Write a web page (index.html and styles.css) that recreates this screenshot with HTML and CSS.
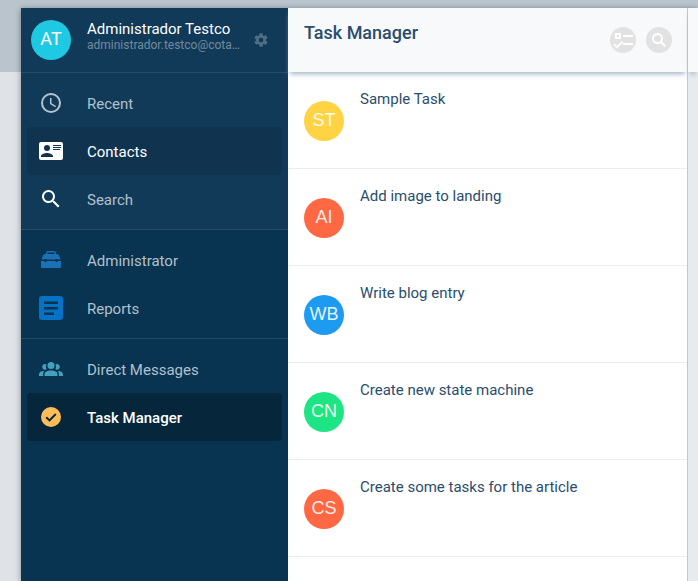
FILE: index.html
```html
<!DOCTYPE html>
<html lang="en">
<head>
<meta charset="utf-8">
<title>Task Manager</title>
<link rel="stylesheet" href="styles.css">
</head>
<body>
<div class="app">
  <aside class="sidebar">
    <div class="sidebar-top">
      <div class="profile">
        <span class="avatar cyan">AT</span>
        <div class="profile-text">
          <div class="profile-name">Administrador Testco</div>
          <div class="profile-mail">administrador.testco@cota…</div>
        </div>
        <button class="gear" aria-label="Settings"><svg viewBox="0 0 24 24" width="16" height="16"><path fill="currentColor" d="M19.43 12.98c.04-.32.07-.64.07-.98s-.03-.66-.07-.98l2.11-1.65c.19-.15.24-.42.12-.64l-2-3.46c-.12-.22-.39-.3-.61-.22l-2.49 1c-.52-.4-1.08-.73-1.69-.98l-.38-2.65A.49.49 0 0 0 14 2h-4c-.25 0-.46.18-.49.42l-.38 2.65c-.61.25-1.17.59-1.69.98l-2.49-1c-.23-.09-.49 0-.61.22l-2 3.46c-.13.22-.07.49.12.64l2.11 1.65c-.04.32-.07.65-.07.98s.03.66.07.98l-2.11 1.65c-.19.15-.24.42-.12.64l2 3.46c.12.22.39.3.61.22l2.49-1c.52.4 1.08.73 1.69.98l.38 2.65c.03.24.24.42.49.42h4c.25 0 .46-.18.49-.42l.38-2.65c.61-.25 1.17-.59 1.69-.98l2.49 1c.23.09.49 0 .61-.22l2-3.46c.12-.22.07-.49-.12-.64zM12 15.5a3.5 3.5 0 1 1 0-7 3.5 3.5 0 0 1 0 7z"/></svg></button>
      </div>
      <nav class="group" aria-label="Shortcuts">
        <a class="item" href="#recent"><svg class="icon muted" viewBox="0 0 24 24"><path fill="currentColor" d="M12 2a10 10 0 1 0 0 20 10 10 0 0 0 0-20zm0 18a8 8 0 1 1 0-16 8 8 0 0 1 0 16zm.5-13H11v6l5.25 3.15.75-1.23-4.5-2.67z"/></svg><span class="label">Recent</span></a>
        <a class="item hover" href="#contacts"><svg class="icon" viewBox="0 0 24 24"><path fill="currentColor" fill-rule="evenodd" d="M2 3h20a2 2 0 0 1 2 2v14a2 2 0 0 1-2 2H2a2 2 0 0 1-2-2V5a2 2 0 0 1 2-2zM8 6a3 3 0 1 0 0 6 3 3 0 0 0 0-6zM2 18h12v-1c0-2-4-3.1-6-3.1S2 15 2 17zM14 6v1h8V6zM14 8v1h8V8zM14 10v1h7v-1z"/></svg><span class="label">Contacts</span></a>
        <a class="item" href="#search"><svg class="icon" viewBox="0 0 24 24"><path fill="currentColor" d="M15.5 14h-.79l-.28-.27a6.5 6.5 0 1 0-.7.7l.27.28v.79l5 4.99L20.49 19zm-6 0a4.5 4.5 0 1 1 0-9 4.5 4.5 0 0 1 0 9z"/></svg><span class="label">Search</span></a>
      </nav>
    </div>
    <nav class="group" aria-label="Administration">
      <a class="item" href="#administrator"><svg class="icon blue" viewBox="0 0 24 24"><path fill="currentColor" fill-rule="evenodd" d="M7 6V5q0-2 2-2h6q2 0 2 2v1h1q1.500 0 2 1.500l1.500 4H18.500V11h-2v.5h-9V11h-2v.5h-3l1.500-4Q4.500 6 6 6zM8.500 4.500V6h7V4.500zM2 13h3.500v1h2v-1h9v1h2v-1H22v6q0 1-1 1H3q-1 0-1-1z"/></svg><span class="label">Administrator</span></a>
      <a class="item" href="#reports"><svg class="icon bright" viewBox="0 0 24 24"><path fill="currentColor" fill-rule="evenodd" d="M3 0h18a3 3 0 0 1 3 3v18a3 3 0 0 1-3 3H3a3 3 0 0 1-3-3V3a3 3 0 0 1 3-3zM5 5.500V8h14V5.500zM5 11v2.500h14V11zM5 16.500V19h10v-2.500z"/></svg><span class="label">Reports</span></a>
    </nav>
    <nav class="group" aria-label="Channels">
      <a class="item" href="#messages"><svg class="icon teal" viewBox="0 0 24 24"><g fill="currentColor"><circle cx="12" cy="8.500" r="3.500"/><path d="M5.500 19v-1.500c0-3 3-4 6.500-4s6.500 1 6.500 4V19z"/><path d="M7.500 7.500A2.800 2.800 0 1 0 7.500 12.200 5 5 0 0 1 7.500 7.500zM16.500 7.500a2.800 2.800 0 1 1 0 4.700 5 5 0 0 0 0-4.700z"/><path d="M0 19v-1.500C0 15 2 14 5.500 14 4.300 15 4 16.500 4 19zM24 19v-1.500c0-2.500-2-3.500-5.500-3.500 1.200 1 1.500 2.500 1.500 5z"/></g></svg><span class="label">Direct Messages</span></a>
      <a class="item active" href="#tasks" aria-current="page"><svg class="icon amber" viewBox="0 0 24 24"><circle cx="12" cy="12" r="10" fill="currentColor"/><path d="M7.200 12.200l3.300 3.200L16.800 9" fill="none" stroke="#06263c" stroke-width="2"/></svg><span class="label">Task Manager</span></a>
    </nav>
  </aside>
  <main class="tasks">
    <header class="bar">
      <h1>Task Manager</h1>
      <button class="round" aria-label="Select tasks"><svg viewBox="0 0 26 26" width="26" height="26"><g fill="none" stroke="#fff" stroke-width="2"><path d="M6 7h4v4H6zM13 9h10M13 17h10M4 17.200l3 3 5.500-5.500"/></g></svg></button>
      <button class="round" aria-label="Search"><svg viewBox="0 0 26 26" width="26" height="26"><g fill="none" stroke="#fff" stroke-width="2"><circle cx="11.500" cy="11.500" r="4.500"/><path d="M14.700 14.700l4.500 4.500"/></g></svg></button>
    </header>
    <ul class="list">
      <li class="task"><span class="avatar yellow">ST</span><span class="task-title">Sample Task</span></li>
      <li class="task"><span class="avatar coral">AI</span><span class="task-title">Add image to landing</span></li>
      <li class="task"><span class="avatar azure">WB</span><span class="task-title">Write blog entry</span></li>
      <li class="task"><span class="avatar green">CN</span><span class="task-title">Create new state machine</span></li>
      <li class="task"><span class="avatar coral">CS</span><span class="task-title">Create some tasks for the article</span></li>
    </ul>
  </main>
  <section class="detail" aria-label="Detail"><div class="bar"></div></section>
</div>
</body>
</html>
```
FILE: styles.css
```css
* { box-sizing: border-box; }

body {
  margin: 0;
  min-height: 100vh;
  padding: 8px 0 0 21px;
  background: linear-gradient(#b9c4cc 72px, #dfe3e8 72px);
  font-family: Roboto, "Liberation Sans", sans-serif;
  font-size: 15px;
  line-height: 18px;
  color: #2a4d6c;
}

button {
  padding: 0;
  border: 0;
  background: none;
}

svg { display: block; }

.app {
  display: grid;
  grid-template-columns: 267px 1fr 10px;
  min-height: calc(100vh - 8px);
  background: #fff;
  box-shadow: 0 1px 6px rgba(0, 0, 0, 0.4);
}

.sidebar {
  background: #083351;
  color: #b3c1cb;
}

.sidebar-top { background: #113a59; }

.profile {
  display: flex;
  align-items: center;
  height: 64px;
  padding: 0 19px 0 10px;
}

.profile-text {
  flex: 1;
  min-width: 0;
  margin: 0 12px 8px 16px;
}

.profile-name {
  color: #fff;
  white-space: nowrap;
}

.profile-mail {
  font-size: 12px;
  line-height: 14px;
  color: #718a9c;
  white-space: nowrap;
}

.gear { color: #4f6d84; }

.avatar {
  flex: none;
  width: 40px;
  height: 40px;
  border-radius: 50%;
  font-size: 18px;
  line-height: 38px;
  text-align: center;
  color: #fff;
}

.cyan { background: #1fc8e3; }
.yellow { background: #ffd343; }
.coral { background: #ff6842; }
.azure { background: #1d9bf0; }
.green { background: #1de583; }

.group {
  padding: 6px 6px;
  border-top: 1px solid #264b67;
}

.item {
  display: flex;
  align-items: center;
  gap: 24px;
  height: 48px;
  padding: 0 12px;
  border-radius: 4px;
  color: inherit;
  text-decoration: none;
}

.label { padding-top: 2px; }

.item.hover {
  background: #10344f;
  color: #fff;
}

.item.active {
  background: #06263c;
  color: #fff;
  font-weight: 500;
}

.icon {
  width: 24px;
  height: 24px;
  color: #fff;
}

.icon.muted { color: #b8c4cd; }
.icon.blue { color: #1a72b5; }
.icon.bright { color: #0572c6; }
.icon.teal { color: #43a1bb; }
.icon.amber { color: #ffbd59; }

.tasks { border-right: 1px solid #c4c7c9; }

.bar {
  display: flex;
  gap: 10px;
  height: 64px;
  padding: 16px 15px 0 16px;
  background: #f7f9fb;
  box-shadow: 0 4px 5px -2px #a2b4c3;
}

h1 {
  flex: 1;
  margin: 0;
  font-size: 18px;
  line-height: 18px;
  font-weight: 500;
}

.round {
  width: 26px;
  height: 26px;
  margin-top: 3px;
  border-radius: 50%;
  background: #e2e2e2;
}

.list {
  margin: 0;
  padding: 0;
  list-style: none;
}

.task {
  display: flex;
  gap: 16px;
  align-items: center;
  height: 97px;
  padding: 2px 16px 0;
  border-bottom: 1px solid #ebedee;
}

.task .avatar {
  font-family: "Liberation Sans", sans-serif;
  color: rgba(255, 255, 255, 0.9);
}

.task-title {
  align-self: flex-start;
  margin-top: 16px;
}

.detail { background: #e7ebee; }

.detail .bar { padding: 0; }
```
